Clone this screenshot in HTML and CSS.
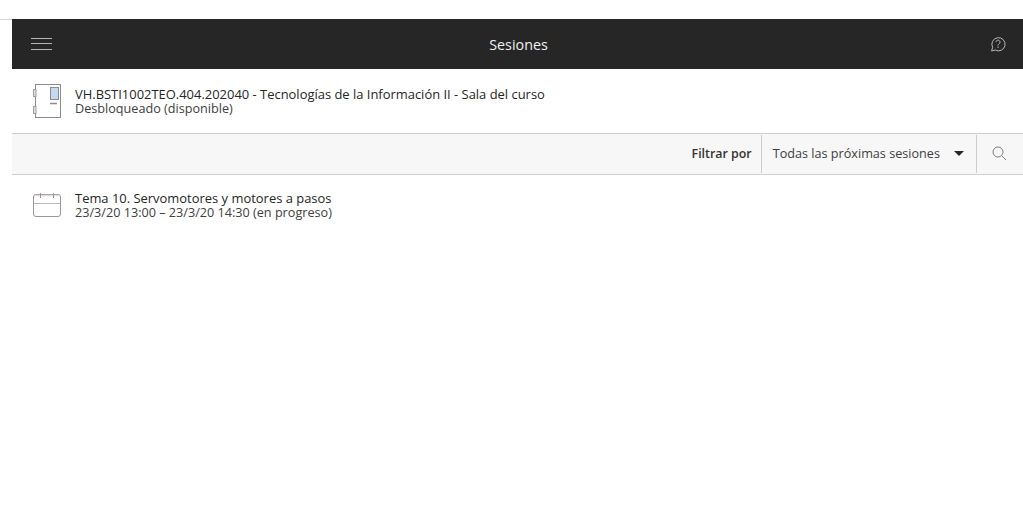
FILE: index.html
```html
<!DOCTYPE html>
<html lang="es">
<head>
<meta charset="utf-8">
<title>Sesiones</title>
<link rel="stylesheet" href="styles.css">
</head>
<body>
<div class="page">
  <div class="gutter"><div class="gutter-line"></div></div>
  <main class="panel">
    <header class="topbar">
      <button class="icon-btn menu" aria-label="Menú">
        <svg width="22" height="14" viewBox="0 0 22 14"><path d="M0 1.5H21M0 6.5H21M0 12.5H21" stroke="#b5b5b5" stroke-width="1" fill="none"/></svg>
      </button>
      <h1 class="title">Sesiones</h1>
      <button class="icon-btn help" aria-label="Ayuda">
        <svg width="16" height="16" viewBox="0 0 16 16" fill="none"><path d="M1.6 15 2.6 11.3A6.6 6.6 0 1 1 5.2 14Z" stroke="#b8b8b8" stroke-width="1"/><path d="M6 6.2C6 3.5 10 3.5 10 6.2 10 7.9 8 7.7 8 9.6" stroke="#b8b8b8" stroke-width="1"/><path d="M8 10.6V12" stroke="#b8b8b8" stroke-width="1"/></svg>
      </button>
    </header>
    <section class="row room">
      <svg class="row-icon" width="28" height="36" viewBox="0 0 28 36" fill="none">
        <rect x="2.5" y="1.5" width="25" height="33" fill="#fff" stroke="#8c8c8c"/>
        <rect x="0.5" y="6.5" width="2.5" height="7" fill="#ddd" stroke="#a0a0a0"/>
        <rect x="0.5" y="23.5" width="2.5" height="7" fill="#ddd" stroke="#a0a0a0"/>
        <rect x="17.5" y="4.5" width="8" height="12" fill="#c4d9f2" stroke="#8c8c8c"/>
        <path d="M17 20.5H24" stroke="#8c8c8c" stroke-width="1.5"/>
      </svg>
      <div class="row-text">
        <div class="row-title">VH.BSTI1002TEO.404.202040 - Tecnologías de la Información II - Sala del curso</div>
        <div class="row-sub">Desbloqueado (disponible)</div>
      </div>
    </section>
    <section class="filterbar">
      <span class="filter-label">Filtrar por</span>
      <div class="filter-select">
        <span>Todas las próximas sesiones</span>
        <span class="caret"></span>
      </div>
      <button class="icon-btn search" aria-label="Buscar">
        <svg width="15" height="15" viewBox="0 0 15 15" fill="none"><circle cx="6" cy="6" r="5" stroke="#808080"/><path d="M9.6 9.6 14 14" stroke="#808080"/></svg>
      </button>
    </section>
    <section class="row session">
      <svg class="row-icon" width="28" height="25" viewBox="0 0 28 25" fill="none">
        <path d="M3 1.5H25A2.5 2.5 0 0 1 27.5 4V21A2.5 2.5 0 0 1 25 23.5H3A2.5 2.5 0 0 1 .5 21V4A2.5 2.5 0 0 1 3 1.5Z" fill="#fff" stroke="#999"/>
        <path d="M1 10.5H27" stroke="#b8b8b8"/>
        <path d="M2.5 2.5H25.5" stroke="#ecd5d9" stroke-width="1.5"/>
        <path d="M7.5 0V5M20.5 0V5" stroke="#999"/>
      </svg>
      <div class="row-text">
        <div class="row-title">Tema 10. Servomotores y motores a pasos</div>
        <div class="row-sub">23/3/20 13:00 – 23/3/20 14:30 (en progreso)</div>
      </div>
    </section>
  </main>
</div>
</body>
</html>
```

FILE: styles.css
```css
* { box-sizing: border-box; }
html, body { margin: 0; padding: 0; height: 100%; background: #fff; overflow: hidden; }
body { font-family: "Open Sans", sans-serif; color: #262626; font-size: 13px; }
.page { display: flex; height: 100%; padding-top: 19px; }
.gutter { width: 12px; flex: none; }
.gutter-line { height: 1px; background: #d4d4d4; }
.panel { flex: 1; min-width: 0; display: flex; flex-direction: column; }
.icon-btn { border: 0; background: none; padding: 0; display: flex; align-items: center; justify-content: center; }
.topbar { height: 50px; background: #262626; display: flex; align-items: center; justify-content: space-between; padding: 0 17px 0 19px; flex: none; }
.help { width: 22px; justify-content: flex-end; }
.title { margin: 0; font-size: 14.3px; font-weight: 500; color: #f0f0f0; }
.row { display: flex; align-items: center; padding-left: 21px; gap: 14px; flex: none; }
.row-icon { flex: none; }
.room { height: 65px; border-bottom: 1px solid #cdcdcd; }
.session { height: 60px; }
.row-text { line-height: 14px; }
.row-title { font-size: 12.95px; font-weight: 500; color: #262626; }
.row-sub { font-size: 12.65px; color: #404040; }
.filterbar { height: 41px; background: #f7f7f7; border-bottom: 1px solid #cdcdcd; display: flex; align-items: stretch; justify-content: flex-end; flex: none; }
.filter-label { font-size: 12.4px; font-weight: 600; color: #333; align-self: center; padding: 0 9px 2px 0; }
.filter-select { display: flex; align-items: center; gap: 14px; margin: 1px 0; border-left: 1px solid #cdcdcd; border-right: 1px solid #cdcdcd; padding: 0 12px 2px 11px; font-size: 12.65px; color: #404040; }
.caret { width: 0; height: 0; border-left: 5px solid transparent; border-right: 5px solid transparent; border-top: 5px solid #262626; }
.search { width: 46px; padding: 0 2px 2px 0; }
```
